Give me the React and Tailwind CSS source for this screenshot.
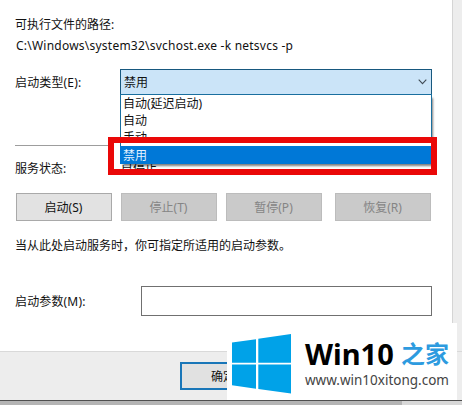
const options = ["自动(延迟启动)", "自动", "手动", "禁用"];

function ActionButton({ label, disabled }) {
  return (
    <button
      className={
        "box-border flex h-[28px] w-[96px] items-center justify-center border pr-px " +
        (disabled
          ? "border-[#bcbcbc] bg-[#cacaca] text-[#858585]"
          : "border-[#a9a9a9] bg-[#e2e2e2] text-[#111]")
      }
    >
      <span>{label}</span>
    </button>
  );
}

function StartupSelect() {
  return (
    <div className="relative h-[26px] w-[312px]">
      <div className="flex h-[26px] items-center justify-between border border-[#17587f] bg-[#cbe4f8] pl-[3px] pr-[4px]">
        <span>禁用</span>
        <svg width="9" height="6" viewBox="0 0 9 6" fill="none" stroke="#404b55" strokeWidth="1.1">
          <path d="M.7.7 4.5 4.6 8.3.7" />
        </svg>
      </div>
      <ul className="absolute left-0 top-[25px] w-[312px] border border-[#1a6f9f] bg-white shadow-[2px_3px_2px_-1px_rgba(0,0,0,0.5)]">
        {options.map((o, i) => (
          <li
            key={o}
            className={
              i === 3
                ? "-mx-px -mb-px flex h-[18px] items-center bg-[#0078d7] pl-[3px] text-[#e4f2ff]"
                : "flex h-[17px] items-center pl-[2px]"
            }
          >
            {o}
          </li>
        ))}
      </ul>
      <div className="absolute left-[-12px] top-[68px] h-[38px] w-[329px] border-[6px] border-[#ea0808]" />
    </div>
  );
}

function WindowsLogo() {
  return (
    <svg width="59" height="60" viewBox="0 0 59 60" fill="#00a2e8">
      <path d="M0 8.6 24 5.2V28.7H0ZM26.3 4.8 59 0V28.7H26.3ZM0 30.5H24V54.7L0 51.3ZM26.3 30.5H59V59.6L26.3 55Z" />
    </svg>
  );
}

function SiteBadge() {
  return (
    <div className="absolute left-[227px] top-[323px] flex h-[77px] w-[230px] bg-white pl-[5px] pt-[11px]">
      <WindowsLogo />
      <div className="ml-[14px] flex flex-col whitespace-nowrap">
        <div className="mt-[5px] flex h-[30px] items-center">
          <span className="w-[96px] text-[29px] font-bold leading-[30px] text-black">Win10</span>
          <span className="text-[24px] font-bold leading-[30px] text-[#2d9bdf]">之家</span>
        </div>
        <span className="mt-px text-[13.5px] leading-[20px] text-[#444]">www.win10xitong.com</span>
      </div>
    </div>
  );
}

export default function App() {
  return (
    <div className="relative flex h-[405px] w-[462px] flex-col overflow-hidden bg-[#ededed] font-['Noto_Sans','Noto_Sans_CJK_SC',sans-serif] text-[12px] leading-[17px] text-[#111]">
      <main className="flex h-[351px] w-[453px] flex-col border-r border-[#d5d5d5] bg-white pl-[15px]">
        <p className="mt-[16px] h-[17px]">可执行文件的路径:</p>
        <p className="mt-[4px] h-[17px] whitespace-pre pl-px tracking-[0.23px]">C:\Windows\system32\svchost.exe -k netsvcs -p</p>
        <div className="relative z-10 mt-[15px] flex h-[26px] items-center">
          <label className="w-[105px] tracking-[0.15px]">启动类型(E):</label>
          <StartupSelect />
        </div>
        <hr className="mt-[50px] w-[94px] border-[#9d9d9d]" />
        <div className="mt-[14px] flex h-[17px]">
          <span className="w-[106px]">服务状态:</span>
          <span>已停止</span>
        </div>
        <div className="ml-px mt-[16px] flex h-[28px]">
          <ActionButton label="启动(S)" />
          <span className="w-[9px]" />
          <ActionButton label="停止(T)" disabled />
          <span className="w-[9px]" />
          <ActionButton label="暂停(P)" disabled />
          <span className="w-[13px]" />
          <ActionButton label="恢复(R)" disabled />
        </div>
        <p className="mt-[16px] h-[17px]">当从此处启动服务时，你可指定所适用的启动参数。</p>
        <div className="mt-[32px] flex h-[30px] items-center">
          <label className="w-[126px] tracking-[0.15px]">启动参数(M):</label>
          <div className="h-[30px] w-[291px] border border-[#707070] bg-white" />
        </div>
      </main>
      <footer className="flex h-[49px] border-t border-[#d9d9d9] pl-[180px] pt-[10px]">
        <button className="flex h-[28px] w-[96px] items-center border-2 border-[#1976b8] bg-[#e1e1e1] pl-[29px]">确定</button>
      </footer>
      <div className="flex h-[5px] border-t border-[#4f4f4f]">
        <div className="w-[402px] bg-[#b4b4b4]" />
        <div className="flex-1 bg-[#d8d8d8]" />
      </div>
      <SiteBadge />
    </div>
  );
}
